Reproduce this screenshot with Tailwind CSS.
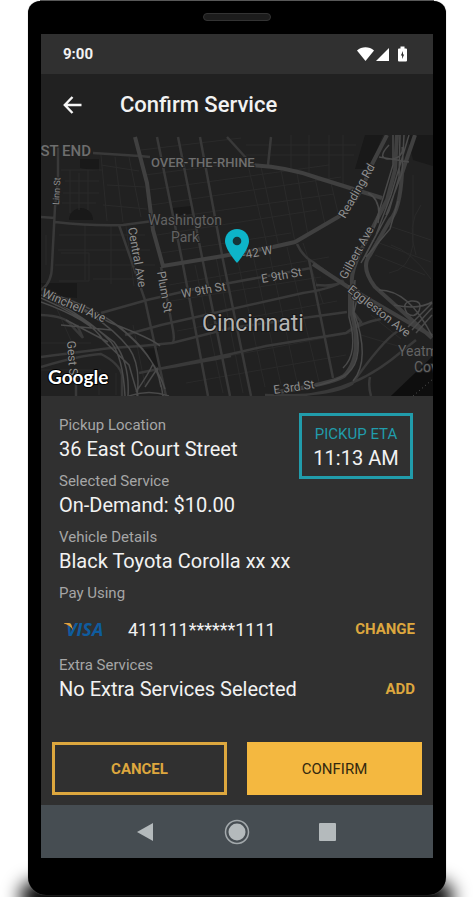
<!DOCTYPE html>
<html lang="en">
<head>
    <meta charset="utf-8" />
    <meta name="viewport" content="width=device-width, initial-scale=1.0">
    <title>Confirm Service</title>
    <script src="https://cdn.jsdelivr.net/npm/@tailwindcss/browser@4"></script>
</head>
<body class="bg-white font-[Roboto,sans-serif] text-[#f2f2f2]">
    <!-- Phone body -->
    <div class="relative overflow-hidden pr-[27px] pb-[2px] pl-7">
        <!-- Ground shadow -->
        <div class="absolute inset-x-5 -bottom-4 h-8 rounded-full bg-black blur-[9px]"></div>

        <div class="mx-3 h-px bg-[#555]"></div>
        <div class="relative rounded-t-[12px] rounded-b-[18px] bg-black px-[13px] shadow-[0_0_1px_0_#777]">
            <div class="flex h-[33px] justify-center pt-3">
                <div class="h-2 w-[68px] rounded-full border border-[#333] bg-[#1c1c1c]"></div>
            </div>

            <!-- Status bar -->
            <div class="flex h-10 items-center justify-between bg-[#303030] pr-[25px] pl-[22px]">
                <span class="text-[15px] leading-6 font-bold">9:00</span>
                <svg class="h-4 w-[51px]" viewBox="0 0 51 16" fill="#fff">
                    <path d="M0 4.500C4.800 .2 12.200 .2 17 4.500L8.500 15Z" />
                    <path d="M32 2V15H19Z" />
                    <path fill-rule="evenodd" d="M43.500 .5h4v2h1.500q1 0 1 1v11q0 1-1 1h-7q-1 0-1-1v-11q0-1 1-1h1.500ZM46 5L43.800 9.500h1.300V13l2.100-4.500H46Z" />
                </svg>
            </div>

            <!-- App bar -->
            <header class="flex h-[61px] items-center bg-[#212121] pl-[22px]">
                <button aria-label="Back" class="w-[57px]">
                    <svg class="h-[18px] w-[19px]" viewBox="0 0 19 18" fill="none" stroke="#f5f5f5" stroke-width="2.400">
                        <path d="M18.500 9H2M9.500 1L1.800 9L9.500 17" />
                    </svg>
                </button>
                <h1 class="text-[22px] font-medium">Confirm Service</h1>
            </header>

            <!-- Map -->
            <svg class="block w-full bg-[#212121]" viewBox="0 0 392 261" fill="none">
                <g fill="#191919">
                    <path d="M39 24H58V36L39 33ZM28 85a12 12 0 0 1 24 0ZM132 73l18-2v9l-17 2ZM324 0h18L328 34h-14ZM366 0h26v31l-20-6ZM0 148h36v15L6 160ZM101 214l16-1v19l-8-5ZM350 261l42-40v40Z" />
                </g>
                <!-- Small streets -->
                <g stroke="#2a2a2a" stroke-width="1">
                    <path d="M20 35H62M24 46h34M22 58h36M21 68h34M29 35V78M38 38V75M47 35v40M60 20l6 66M74 22l8 65M88 22l12 60M60 30l38 6M66 50l38 2M62 70l44 4" />
                    <path d="M18 100h86M17 115h92M14 130h100M44 90v55M70 91v58M85 91l8 60M20 118h28v28H18M52 144h50" />
                    <path d="M100 15l100-12M104 40l106-14M108 55l180-25M110 70l190-28M113 85l180-26M116 100l160-25M120 118l130-20M205 22l22 92M220 32l18 80M240 35l14 72M256 38l11 62M274 43l10 46M290 48l8 34M205 10h110M205 20h108M250 0v34M268 0v40M288 0v46M302 0v50" />
                    <path d="M128 150l160-28M130 166l150-24M136 196l160-30M140 230l170-32M145 248l160-28M154 130l28 128M175 122l27 136M196 122l28 130M212 120l28 130M228 117l28 130M246 112l32 135M262 108l20 60" />
                    <path d="M334 120l50 20M330 105l60 22M345 90l45 15M372 40v70q-4 25 -24 28M350 110q20 6 40 34M380 70q-15 20 -5 50M320 200l40 12M330 180l30 24M12 165l20 45M58 240v20M75 238v22M92 190l12 60M0 208h50M0 235h60M5 100v30" />
                </g>
                <!-- Streets -->
                <g stroke="#393939" stroke-width="2.500">
                    <path d="M17 10V45L14 72L11 130Q11 148 0 155M0 82l14 1M52 18L99 21L109 22M14 87Q50 91 82 90L112 86" />
                    <path d="M116 2L141 125L152 182L167 261M137 2L161 122L189 261M159 2L182 125L210 261M186 2L206 24M230 2L227 30M78 90L104 165L125 261M120 132L132 195Q134 207 131 208" />
                    <path d="M60 178L106 165L158 153M183 149L270 133M84 200L120 190L262 158Q290 154 303 146M100 211L131 208L190 193L306 177M98 238L190 219L225 211L305 198Q322 187 340 184M268 125L292 243M256 109Q262 122 272 127L288 139M112 235Q160 227 190 221M275 150q22 2 27 -5M305 198L320 187L311 175" />
                    <path d="M42 203L36 190M35 235V261M0 180Q25 181 30 190L42 203M0 222Q45 216 70 213L100 211M0 232Q40 220 60 219Q78 228 81 240V261" />
                    <path d="M224 260Q290 262 311 249Q342 205 357 196M240 261Q302 262 350 225L375 205M329 242Q327 250 330 261" />
                </g>
                <!-- Main roads -->
                <g stroke="#404040" stroke-width="4">
                    <path d="M94 2L106 48L112 95L122 131L182 121L232 112L254 107L297 82Q318 68 328 35L346 0M204 30Q244 31 277 43L341 63" />
                    <path d="M356 0L354 35L346 65L327 102Q309 135 311 148V180Q322 222 303 241Q290 249 235 257" />
                    <path d="M374 0L361 38Q359 75 349 85L329 120Q319 132 334 152L391 203M272 129L307 152L391 201" />
                </g>
                <!-- Freeway strands -->
                <g stroke="#4a4a4a" stroke-width="1.500">
                    <path d="M359 0L358 42L348 76L322 125M363 0L361 38L345 80M352 0v30L333 93M368 0L350 60L335 100L320 128M348 10q-14 15 3 14q12 -2 10 -12M338 22l30 5M327 58q14 7 10 30M357 66l-8 28l-24 28" />
                    <path d="M314 145L312 178Q325 224 306 239Q290 250 235 259M308 150v32Q318 218 302 233M318 155L313 177Q330 225 312 246M338 155q30 0 53 46M366 178q-6 -10 4 -12q12 -1 8 10q-5 8 -12 2M353 170q25 5 38 -3M391 168l-24 24M391 173l-20 22M391 180l-16 18" />
                    <path d="M0 160Q45 181 70 207Q82 222 84 261M0 163Q40 180 73 207Q89 228 87 261M2 157Q60 178 88 213Q100 230 96 261M8 158Q60 174 88 200Q118 226 122 261M15 160L70 188Q112 204 119 211M0 167Q50 185 62 205L88 230L97 261M75 190Q112 218 124 254M20 190l50 5M25 185l42 22M88 261q20 -7 40 0M95 257Q108 238 112 229M104 252l12 -18l4 18" />
                </g>
                <path d="M350 261L392 221V261Z" fill="#0e0e0e" />
                <path d="M372 261L392 244" stroke="#555" stroke-width="1" stroke-dasharray="1 3" />

                <!-- Labels -->
                <g class="fill-[#6e6e6e] stroke-[#212121] text-[13px] font-medium" stroke-width="2" paint-order="stroke">
                    <text x="-9" y="21" class="text-[15px]">EST END</text>
                    <text x="110" y="32">OVER-THE-RHINE</text>
                </g>
                <g class="fill-[#636363] stroke-[#212121] text-[14px]" stroke-width="2" paint-order="stroke">
                    <text x="144" y="90" text-anchor="middle">Washington</text>
                    <text x="144" y="107" text-anchor="middle">Park</text>
                    <text x="357" y="221">Yeatm</text>
                    <text x="373" y="237">Cov</text>
                </g>
                <g class="fill-[#8f8f8f] stroke-[#212121] text-[12px]" stroke-width="2" paint-order="stroke">
                    <text transform="translate(18 70) rotate(-87)" class="text-[9px]">Linn St</text>
                    <text transform="translate(87 93) rotate(80)">Central Ave</text>
                    <text transform="translate(116 137) rotate(80)">Plum St</text>
                    <text transform="translate(141 163) rotate(-10)">W 9th St</text>
                    <text transform="translate(221 148) rotate(-10)">E 9th St</text>
                    <text transform="translate(202 124) rotate(-10)">-42 W</text>
                    <text transform="translate(233 259) rotate(-8)">E 3rd St</text>
                    <text transform="translate(0 161) rotate(23)">Winchell Ave</text>
                    <text transform="translate(26 206) rotate(86)">Gest St</text>
                    <text transform="translate(304 84) rotate(-60)">Reading Rd</text>
                    <text transform="translate(305 145) rotate(-61)">Gilbert Ave</text>
                    <text transform="translate(306 156) rotate(38)">Eggleston Ave</text>
                </g>
                <text x="161" y="196" class="fill-[#b4b4b4] stroke-[#171717] text-[23px]" stroke-width="2" paint-order="stroke">Cincinnati</text>
                <text x="7" y="249" class="fill-white stroke-black font-[Lato,sans-serif] text-[19px] font-bold" stroke-width="2" paint-order="stroke">Google</text>

                <!-- Pin -->
                <path d="M196 94c-6.900 0-12 5-12 12c0 8.500 12 22 12 22s12-13.500 12-22c0-7-5.100-12-12-12Z" fill="#0db4c9" />
                <circle cx="196" cy="106" r="4.300" fill="#15353a" />
            </svg>

            <!-- Details -->
            <main class="bg-[#303030] pt-[17px] pb-[10px]">
                <div class="px-[18px]">
                    <div class="flex items-start justify-between">
                        <dl class="text-[20px] leading-6">
                            <dt class="text-[15px] leading-6 text-[#a6a6a6]">Pickup Location</dt>
                            <dd class="mb-2">36 East Court Street</dd>
                            <dt class="text-[15px] leading-6 text-[#a6a6a6]">Selected Service</dt>
                            <dd class="mb-2">On-Demand: $10.00</dd>
                            <dt class="text-[15px] leading-6 text-[#a6a6a6]">Vehicle Details</dt>
                            <dd class="mb-2 whitespace-nowrap">Black Toyota Corolla xx xx</dd>
                        </dl>
                        <div class="mr-[2px] -ml-8 h-[66px] w-[114px] shrink-0 border-3 border-[#219cab] pt-[6px] text-center">
                            <p class="text-[15px] leading-6 text-[#219cab]">PICKUP ETA</p>
                            <p class="text-[20px] leading-6">11:13 AM</p>
                        </div>
                    </div>

                    <h2 class="text-[15px] leading-6 text-[#a6a6a6]">Pay Using</h2>
                    <div class="flex h-12 items-center">
                        <svg class="ml-[5px] h-5 w-[42px]" viewBox="0 0 42 20">
                            <text x="2" y="17" class="fill-[#0f5c9e] font-[Open_Sans,sans-serif] text-[18px] font-bold italic">VISA</text>
                            <path d="M0 4H5Q7 4 7.500 6L9 11Q6 6 0 4.500Z" fill="#e0a03c" />
                        </svg>
                        <span class="ml-[22px] text-[18px]">411111******1111</span>
                        <button class="ml-auto text-[15px] leading-6 font-bold text-[#dda73e]">CHANGE</button>
                    </div>

                    <h2 class="text-[15px] leading-6 text-[#a6a6a6]">Extra Services</h2>
                    <div class="flex items-center justify-between">
                        <p class="text-[20px] leading-6">No Extra Services Selected</p>
                        <button class="text-[15px] leading-6 font-bold text-[#dda73e]">ADD</button>
                    </div>
                </div>

                <div class="mt-[41px] grid grid-cols-2 gap-5 px-[11px]">
                    <button class="h-[53px] border-3 border-[#dda73e] text-[15px] leading-6 font-bold text-[#dda73e]">CANCEL</button>
                    <button class="h-[53px] bg-[#f4b840] text-[15px] leading-6 text-[#33290f]">CONFIRM</button>
                </div>
            </main>

            <!-- Navigation bar -->
            <nav class="flex h-[53px] items-center justify-center gap-[65px] bg-[#464d52]">
                <button aria-label="Back">
                    <svg class="size-[26px]" viewBox="0 0 26 26" fill="#b4babc"><path d="M4 13L20 4V22Z" /></svg>
                </button>
                <button aria-label="Home">
                    <svg class="size-[26px]" viewBox="0 0 26 26">
                        <circle cx="13" cy="13" r="11.500" fill="none" stroke="#a3a9ac" stroke-width="1.500" />
                        <circle cx="13" cy="13" r="8.500" fill="#b4babc" />
                    </svg>
                </button>
                <button aria-label="Overview">
                    <svg class="size-[26px]" viewBox="0 0 26 26" fill="#b4babc"><rect x="4" y="4" width="17" height="18" rx="1" /></svg>
                </button>
            </nav>
            <div class="h-[37px]"></div>
        </div>
    </div>
</body>
</html>
